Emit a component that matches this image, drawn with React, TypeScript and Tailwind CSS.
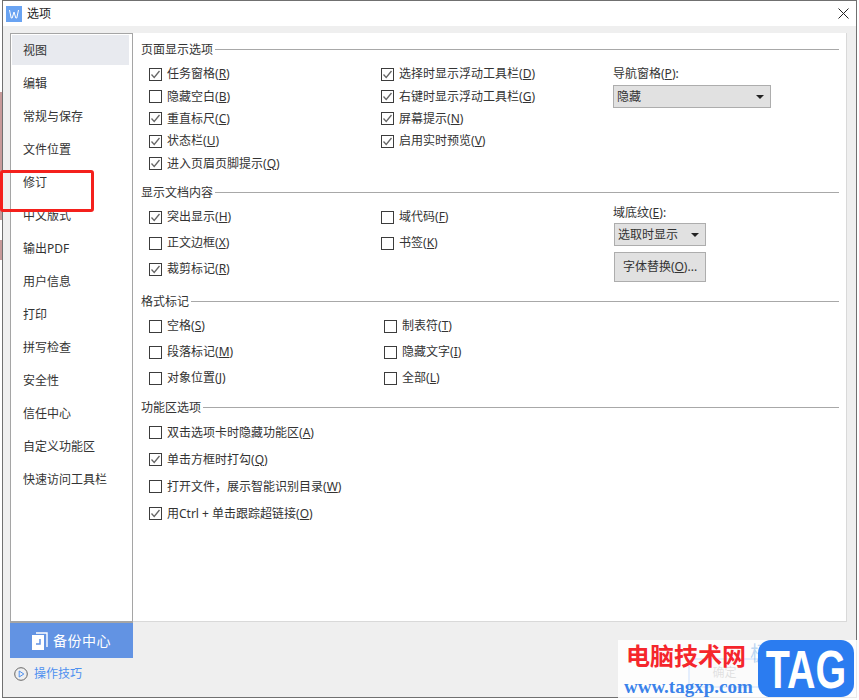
import React from 'react';

const FONT = { fontFamily: '"Noto Sans", "Noto Sans CJK SC", sans-serif' };

const navItems = ['视图', '编辑', '常规与保存', '文件位置', '修订', '中文版式', '输出PDF', '用户信息', '打印', '拼写检查', '安全性', '信任中心', '自定义功能区', '快速访问工具栏'];

interface Opt {
    label: string;
    key: string;
    on?: boolean;
}

function Check({ label, key_, on, h }: { label: string; key_: string; on?: boolean; h: string }) {
    return (
        <div className={`flex items-center gap-[5px] ${h}`}>
            <span className="w-[13px] h-[13px] border border-[#3c3c3c] bg-white flex items-center justify-center shrink-0">
                {on && (
                    <svg width="11" height="11" viewBox="0 0 11 11" fill="none">
                        <path d="M1.5 5.5 L4.2 8.5 L9.5 2" stroke="#666" strokeWidth="1.3" />
                    </svg>
                )}
            </span>
            <span className="text-[12px] text-[#333] whitespace-nowrap leading-none">
                {label}(<u>{key_}</u>)
            </span>
        </div>
    );
}

function Heading({ title }: { title: string }) {
    return (
        <div className="flex items-center gap-[2px] h-4">
            <span className="text-[12px] text-[#333] leading-none whitespace-nowrap pt-[2px]">{title}</span>
            <div className="flex-1 h-px bg-[#a8a8a8]" />
        </div>
    );
}

function Column({ items, h, w }: { items: Opt[]; h: string; w: string }) {
    return (
        <div className={`flex flex-col ${w}`}>
            {items.map((o) => (
                <Check key={o.label} label={o.label} key_={o.key} on={o.on} h={h} />
            ))}
        </div>
    );
}

function Select({ value, w }: { value: string; w: string }) {
    return (
        <div className={`${w} h-[23px] bg-[#e1e1e1] border border-[#adadad] flex items-center justify-between pl-[3px] pr-[6px]`}>
            <span className="text-[12px] text-[#333] leading-none whitespace-nowrap">{value}</span>
            <span className="w-0 h-0 border-l-[4px] border-r-[4px] border-t-[4px] border-l-transparent border-r-transparent border-t-[#222]" />
        </div>
    );
}

export default function App() {
    return (
        <div className="relative w-[859px] h-[700px] overflow-hidden bg-white" style={FONT}>
            {/* bit of the document behind the dialog */}
            <div className="absolute left-0 top-[92px] w-[2px] h-[128px] bg-[#c89a9a]" />
            <div className="absolute left-0 top-[240px] w-[2px] h-[20px] bg-[#c89a9a]" />

            <div className="ml-[2px] w-[855px] h-[698px] border border-[#707070] bg-[#efefef] flex flex-col">
                <div className="h-[25px] bg-white flex items-center shrink-0 pl-[3px] pr-[7px]">
                    <span className="w-4 h-4 bg-[#69a3f2] flex items-center justify-center">
                        <svg width="12" height="10" viewBox="0 0 12 10" fill="none">
                            <path d="M1.5 1 L3.2 9 H4.2 L6 3 L7.8 9 H8.8 L10.5 1" stroke="#fff" strokeWidth="1" />
                        </svg>
                    </span>
                    <span className="ml-[5px] text-[12px] text-[#222] leading-none">选项</span>
                    <svg className="ml-auto" width="11" height="11" viewBox="0 0 11 11" fill="none">
                        <path d="M0.5 0.5 L10.5 10.5 M10.5 0.5 L0.5 10.5" stroke="#222" strokeWidth="1" />
                    </svg>
                </div>

                <div className="flex flex-1 pt-[7px] pl-[7px] pr-[9px]">
                    <div className="w-[123px] flex flex-col shrink-0">
                        <div className="h-[590px] border border-[#a5a5a5] border-b-2 bg-white p-px flex flex-col gap-[3px]">
                            {navItems.map((n, i) => (
                                <div key={n} className={`h-[30px] pl-[11px] pt-[2px] flex items-center text-[12px] text-[#333] leading-none shrink-0 ${i === 0 ? 'bg-[#e8eaef] w-[117px]' : ''}`}>
                                    {n}
                                </div>
                            ))}
                        </div>
                        <div className="h-[35px] bg-[#6293e3] flex items-center justify-center gap-[5px]">
                            <svg width="16" height="18" viewBox="0 0 16 18" fill="none">
                                <path d="M4 1 H15 V15" stroke="#fff" strokeWidth="1.4" />
                                <path d="M0 3 H12 V18 H0 Z" fill="#fff" />
                                <path d="M8 7 V12 H4" stroke="#6293e3" strokeWidth="1.5" />
                            </svg>
                            <span className="text-[14px] text-white leading-none tracking-[0.5px]">备份中心</span>
                        </div>
                        <div className="flex items-center mt-[8px] pl-[4px] gap-[6px] h-4">
                            <svg width="14" height="14" viewBox="0 0 14 14" fill="none">
                                <circle cx="7" cy="7" r="6.3" stroke="#666" strokeWidth="1" />
                                <path d="M5.2 4 L9.8 7 L5.2 10 Z" stroke="#4d90f0" strokeWidth="1" />
                            </svg>
                            <span className="text-[12px] text-[#4d90f0] leading-none">操作技巧</span>
                        </div>
                    </div>

                    <div className="flex-1 flex flex-col">
                        <div className="h-[589px] bg-white border-b border-r border-[#d9d9d9] pt-2 pl-2 pr-[7px]">
                            <Heading title="页面显示选项" />
                            <div className="flex mt-[6px] pl-2">
                                <Column
                                    w="w-[232px]"
                                    h="h-[22.4px]"
                                    items={[
                                        { label: '任务窗格', key: 'R', on: true },
                                        { label: '隐藏空白', key: 'B' },
                                        { label: '重直标尺', key: 'C', on: true },
                                        { label: '状态栏', key: 'U', on: true },
                                        { label: '进入页眉页脚提示', key: 'Q', on: true },
                                    ]}
                                />
                                <Column
                                    w="w-[232px]"
                                    h="h-[22.4px]"
                                    items={[
                                        { label: '选择时显示浮动工具栏', key: 'D', on: true },
                                        { label: '右键时显示浮动工具栏', key: 'G', on: true },
                                        { label: '屏幕提示', key: 'N', on: true },
                                        { label: '启用实时预览', key: 'V', on: true },
                                    ]}
                                />
                                <div className="flex flex-col">
                                    <div className="h-[22px] flex items-center text-[12px] text-[#333] leading-none whitespace-nowrap">
                                        导航窗格(<u>P</u>):
                                    </div>
                                    <Select value="隐藏" w="w-[158px]" />
                                </div>
                            </div>

                            <div className="mt-[9.1px]">
                                <Heading title="显示文档内容" />
                            </div>
                            <div className="flex mt-1 pl-2">
                                <Column
                                    w="w-[232px]"
                                    h="h-[26px]"
                                    items={[
                                        { label: '突出显示', key: 'H', on: true },
                                        { label: '正文边框', key: 'X' },
                                        { label: '裁剪标记', key: 'R', on: true },
                                    ]}
                                />
                                <Column
                                    w="w-[232px]"
                                    h="h-[26px]"
                                    items={[
                                        { label: '域代码', key: 'F' },
                                        { label: '书签', key: 'K' },
                                    ]}
                                />
                                <div className="flex flex-col -mt-[1px]">
                                    <div className="h-[20px] flex items-center text-[12px] text-[#333] leading-none whitespace-nowrap">
                                        域底纹(<u>E</u>):
                                    </div>
                                    <div className="ml-px">
                                        <Select value="选取时显示" w="w-[92px]" />
                                        <div className="mt-[6px] w-[92px] h-[30px] bg-[#e1e1e1] border border-[#adadad] flex items-center justify-center text-[12px] text-[#333] leading-none whitespace-nowrap">
                                            字体替换(<u>O</u>)...
                                        </div>
                                    </div>
                                </div>
                            </div>

                            <div className="mt-[11px]">
                                <Heading title="格式标记" />
                            </div>
                            <div className="flex mt-1 pl-2">
                                <Column
                                    w="w-[235px]"
                                    h="h-[26px]"
                                    items={[
                                        { label: '空格', key: 'S' },
                                        { label: '段落标记', key: 'M' },
                                        { label: '对象位置', key: 'J' },
                                    ]}
                                />
                                <Column
                                    w="w-[232px]"
                                    h="h-[26px]"
                                    items={[
                                        { label: '制表符', key: 'T' },
                                        { label: '隐藏文字', key: 'I' },
                                        { label: '全部', key: 'L' },
                                    ]}
                                />
                            </div>

                            <div className="mt-2">
                                <Heading title="功能区选项" />
                            </div>
                            <div className="flex mt-1 pl-2">
                                <Column
                                    w="w-[400px]"
                                    h="h-[27px]"
                                    items={[
                                        { label: '双击选项卡时隐藏功能区', key: 'A' },
                                        { label: '单击方框时打勾', key: 'Q', on: true },
                                        { label: '打开文件，展示智能识别目录', key: 'W' },
                                        { label: '用Ctrl + 单击跟踪超链接', key: 'O', on: true },
                                    ]}
                                />
                            </div>
                        </div>

                        {/* mostly hidden by the watermark */}
                        <div className="flex justify-end gap-[5px] mt-[36px] pr-[8px]">
                            <div className="w-[73px] h-[30px] bg-[#e1e1e1] border-2 border-[#4d90f0] flex items-center justify-center text-[12px] text-[#333] leading-none">确定</div>
                            <div className="w-[73px] h-[30px] bg-[#e1e1e1] border border-[#adadad] flex items-center justify-center text-[12px] text-[#333] leading-none">取消</div>
                        </div>
                    </div>
                </div>
            </div>

            {/* red annotation box */}
            <div className="absolute left-0 top-[170px] w-[94px] h-[42px] border-[3px] border-[#f4201c] rounded-[3px]" />

            {/* site watermark over the dialog buttons */}
            <div className="absolute left-[618px] top-[640px] w-[241px] h-[60px] bg-white/85">
                <span className="absolute left-[132px] top-[4px] text-[20px] text-[#5a9be0]/40 leading-none whitespace-nowrap">极光下载站</span>
                <span className="absolute left-[8px] top-[2px] text-[24px] font-bold text-[#f5262c] leading-[28px] whitespace-nowrap">电脑技术网</span>
                <span className="absolute left-[6px] top-[37px] text-[19px] font-bold text-[#3a82ea] leading-[20px] whitespace-nowrap" style={{ fontFamily: '"Liberation Serif", serif' }}>
                    www.tagxp.com
                </span>
                <div className="absolute left-[140px] top-0 w-[96px] h-[57px] bg-[#2b7cf0] rounded-[13px] flex items-center justify-center">
                    <span className="text-[54px] font-bold text-white leading-none scale-x-[0.73] whitespace-nowrap" style={{ fontFamily: '"Liberation Sans", sans-serif' }}>TAG</span>
                </div>
            </div>
        </div>
    );
}
